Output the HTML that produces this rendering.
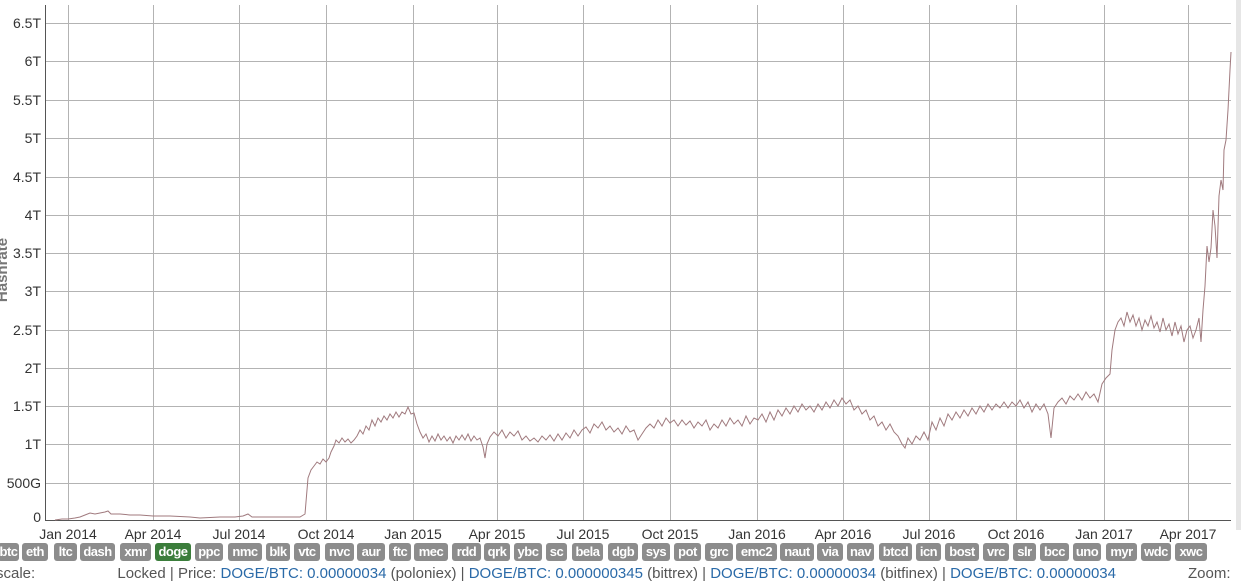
<!DOCTYPE html>
<html><head><meta charset="utf-8"><style>
html,body{margin:0;padding:0;width:1241px;height:573px;overflow:hidden;background:#fff;font-family:"Liberation Sans",Arial,sans-serif}
.b{position:absolute;top:543px;height:18px;line-height:18px;background:#8c8c8c;color:#fff;font-weight:bold;font-size:13px;text-align:center;border-radius:3px;letter-spacing:-0.5px}
.g{background:#3b7d3b}
.yl{font-size:14px;fill:#333}
</style></head><body>
<svg width="1241" height="573" style="position:absolute;left:0;top:0">
<rect x="1236" y="0" width="5" height="530" fill="#e6e6e6"/>
<g stroke="#b3b3b3" stroke-width="1">
<line x1="45" x2="1231" y1="23.5" y2="23.5"/><line x1="45" x2="1231" y1="61.5" y2="61.5"/><line x1="45" x2="1231" y1="100.5" y2="100.5"/><line x1="45" x2="1231" y1="138.5" y2="138.5"/><line x1="45" x2="1231" y1="177.5" y2="177.5"/><line x1="45" x2="1231" y1="215.5" y2="215.5"/><line x1="45" x2="1231" y1="253.5" y2="253.5"/><line x1="45" x2="1231" y1="291.5" y2="291.5"/><line x1="45" x2="1231" y1="330.5" y2="330.5"/><line x1="45" x2="1231" y1="368.5" y2="368.5"/><line x1="45" x2="1231" y1="406.5" y2="406.5"/><line x1="45" x2="1231" y1="444.5" y2="444.5"/><line x1="45" x2="1231" y1="483.5" y2="483.5"/>
<line y1="5" y2="521" x1="68.5" x2="68.5"/><line y1="5" y2="521" x1="153.5" x2="153.5"/><line y1="5" y2="521" x1="239.5" x2="239.5"/><line y1="5" y2="521" x1="326.5" x2="326.5"/><line y1="5" y2="521" x1="413.5" x2="413.5"/><line y1="5" y2="521" x1="497.5" x2="497.5"/><line y1="5" y2="521" x1="583.5" x2="583.5"/><line y1="5" y2="521" x1="670.5" x2="670.5"/><line y1="5" y2="521" x1="757.5" x2="757.5"/><line y1="5" y2="521" x1="843.5" x2="843.5"/><line y1="5" y2="521" x1="929.5" x2="929.5"/><line y1="5" y2="521" x1="1016.5" x2="1016.5"/><line y1="5" y2="521" x1="1104.5" x2="1104.5"/><line y1="5" y2="521" x1="1188.5" x2="1188.5"/>
</g>
<line x1="45.5" x2="45.5" y1="5" y2="521" stroke="#555"/>
<line x1="45" x2="1231" y1="520.5" y2="520.5" stroke="#555"/>
<g class="yl" text-anchor="end">
<text x="41" y="28">6.5T</text><text x="41" y="66">6T</text><text x="41" y="105">5.5T</text><text x="41" y="143">5T</text><text x="41" y="182">4.5T</text><text x="41" y="220">4T</text><text x="41" y="258">3.5T</text><text x="41" y="296">3T</text><text x="41" y="335">2.5T</text><text x="41" y="373">2T</text><text x="41" y="411">1.5T</text><text x="41" y="449">1T</text><text x="41" y="488">500G</text><text x="41" y="522">0</text>
</g>
<text transform="translate(7,270) rotate(-90)" text-anchor="middle" font-size="15" font-weight="bold" fill="#777">Hashrate</text>
<g class="yl" text-anchor="middle">
<text x="68" y="539">Jan 2014</text><text x="153" y="539">Apr 2014</text><text x="239" y="539">Jul 2014</text><text x="326" y="539">Oct 2014</text><text x="413" y="539">Jan 2015</text><text x="497" y="539">Apr 2015</text><text x="583" y="539">Jul 2015</text><text x="670" y="539">Oct 2015</text><text x="757" y="539">Jan 2016</text><text x="843" y="539">Apr 2016</text><text x="929" y="539">Jul 2016</text><text x="1016" y="539">Oct 2016</text><text x="1104" y="539">Jan 2017</text><text x="1188" y="539">Apr 2017</text>
</g>
<polyline fill="none" stroke="#a07a7e" stroke-width="1" points="55,520 62,519 68,519 75,518 80,517 85,515 90,513 95,514 100,513 105,512 108,511 111,514 120,514 130,515 140,515 153,516 170,516 190,517 200,518 220,517 235,517 243,516 248,514 252,517 270,517 290,517 300,517 305,514 308,478 311,470 314,466 317,462 320,464 323,459 326,462 329,458 331,452 334,446 336,440 339,443 342,438 345,442 348,439 351,443 354,440 357,436 360,430 363,434 366,426 369,430 372,420 375,426 378,418 381,422 384,416 387,420 390,414 393,418 396,412 399,417 402,412 405,414 408,407 411,414 414,413 417,424 420,432 423,438 426,434 429,442 432,436 435,441 438,434 441,440 444,436 447,441 450,437 453,443 456,436 459,440 462,435 465,440 468,434 471,441 474,436 477,440 480,438 483,447 485,458 487,444 490,437 494,432 498,436 502,430 506,438 510,432 514,436 518,431 522,440 526,436 530,441 534,438 538,442 542,436 546,440 550,435 554,441 558,434 562,440 566,433 570,438 574,430 578,436 582,430 586,427 590,433 594,424 598,428 602,422 606,430 610,426 614,432 618,428 622,434 626,426 630,432 634,430 638,440 642,434 646,428 650,424 654,428 658,420 662,426 666,418 670,423 674,420 678,426 682,420 686,425 690,421 694,428 698,422 702,426 706,420 710,430 714,424 718,428 722,420 726,426 730,418 734,424 738,420 742,426 746,416 750,424 754,418 758,420 762,414 766,422 770,412 774,420 778,410 782,416 786,408 790,414 794,406 798,412 802,404 806,410 810,406 814,412 818,404 822,410 826,402 830,408 834,400 838,406 842,398 846,404 850,400 854,410 858,406 862,414 866,410 870,420 874,416 878,426 882,422 886,430 890,424 894,432 898,436 902,444 905,448 908,438 912,444 916,436 920,440 924,432 928,440 932,422 936,430 940,418 944,426 948,414 952,420 956,412 960,418 964,410 968,416 972,408 976,414 980,406 984,412 988,404 992,410 996,404 1000,408 1004,402 1008,408 1012,402 1016,406 1020,400 1024,408 1028,402 1032,412 1036,404 1040,410 1044,404 1048,414 1051,438 1054,408 1058,402 1062,398 1066,404 1070,396 1074,400 1078,394 1082,400 1086,392 1090,398 1094,394 1098,402 1102,384 1106,378 1110,374 1112,350 1115,330 1118,322 1121,318 1124,326 1127,312 1130,322 1133,315 1136,326 1139,318 1142,330 1145,320 1148,326 1151,316 1154,328 1157,322 1160,332 1163,318 1166,330 1169,324 1172,336 1175,322 1178,334 1181,326 1184,342 1187,330 1190,326 1193,338 1196,330 1199,318 1201,342 1203,310 1205,286 1207,246 1209,262 1211,248 1213,210 1215,226 1217,258 1219,196 1221,180 1223,190 1224,150 1226,140 1228,110 1230,70 1231,52"/>
</svg>
<div class="b" style="left:-2px;width:21px">btc</div>
<div class="b" style="left:22px;width:26px">eth</div>
<div class="b" style="left:54px;width:23px">ltc</div>
<div class="b" style="left:80px;width:35px">dash</div>
<div class="b" style="left:120px;width:31px">xmr</div>
<div class="b g" style="left:155px;width:36px">doge</div>
<div class="b" style="left:195px;width:28px">ppc</div>
<div class="b" style="left:228px;width:34px">nmc</div>
<div class="b" style="left:266px;width:24px">blk</div>
<div class="b" style="left:294px;width:26px">vtc</div>
<div class="b" style="left:325px;width:29px">nvc</div>
<div class="b" style="left:357px;width:28px">aur</div>
<div class="b" style="left:389px;width:22px">ftc</div>
<div class="b" style="left:414px;width:34px">mec</div>
<div class="b" style="left:452px;width:29px">rdd</div>
<div class="b" style="left:484px;width:26px">qrk</div>
<div class="b" style="left:514px;width:28px">ybc</div>
<div class="b" style="left:546px;width:21px">sc</div>
<div class="b" style="left:572px;width:31px">bela</div>
<div class="b" style="left:608px;width:30px">dgb</div>
<div class="b" style="left:642px;width:28px">sys</div>
<div class="b" style="left:674px;width:27px">pot</div>
<div class="b" style="left:705px;width:28px">grc</div>
<div class="b" style="left:736px;width:41px">emc2</div>
<div class="b" style="left:780px;width:34px">naut</div>
<div class="b" style="left:817px;width:26px">via</div>
<div class="b" style="left:847px;width:27px">nav</div>
<div class="b" style="left:879px;width:33px">btcd</div>
<div class="b" style="left:916px;width:25px">icn</div>
<div class="b" style="left:945px;width:34px">bost</div>
<div class="b" style="left:983px;width:26px">vrc</div>
<div class="b" style="left:1013px;width:23px">slr</div>
<div class="b" style="left:1040px;width:29px">bcc</div>
<div class="b" style="left:1073px;width:28px">uno</div>
<div class="b" style="left:1106px;width:31px">myr</div>
<div class="b" style="left:1141px;width:30px">wdc</div>
<div class="b" style="left:1175px;width:32px">xwc</div>
<div style="position:absolute;top:565px;left:-4px;white-space:nowrap;font-size:15px;color:#555">scale: <span style="margin-left:78px">Locked</span> | Price: <span style="color:#2a6aa8">DOGE/BTC: 0.00000034</span> (poloniex) | <span style="color:#2a6aa8">DOGE/BTC: 0.000000345</span> (bittrex) | <span style="color:#2a6aa8">DOGE/BTC: 0.00000034</span> (bitfinex) | <span style="color:#2a6aa8">DOGE/BTC: 0.00000034</span></div>
<div style="position:absolute;top:565px;left:1188px;font-size:15px;color:#555">Zoom:</div>
</body></html>
